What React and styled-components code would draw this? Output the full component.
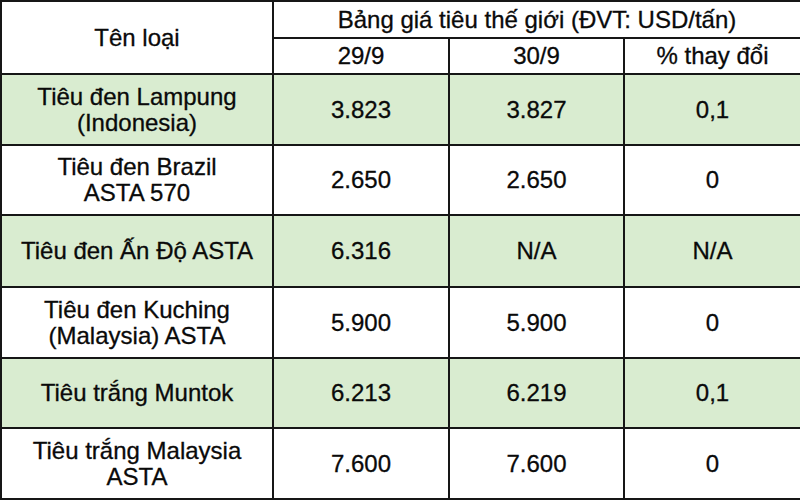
import React from "react";
import styled, { createGlobalStyle } from "styled-components";

const Global = createGlobalStyle`
  html, body { margin: 0; padding: 0; background: #ffffff; }
  body { font-family: "Liberation Sans", Arial, sans-serif; }
`;

const Table = styled.table`
  width: 800px;
  height: 500px;
  table-layout: fixed;
  border-collapse: collapse;
  border: 2px solid #161616;
  color: #0a0a0a;
  font-family: "Liberation Sans", Arial, sans-serif;
  font-size: 24px;
  line-height: 26px;
  -webkit-text-stroke: 0.3px #0a0a0a;
`;

const Row = styled.tr`
  height: ${(p) => p.$h}px;
  background: ${(p) => (p.$green ? "#d9ecd0" : "#ffffff")};
`;

const Cell = styled.td`
  border: 2px solid #161616;
  text-align: center;
  vertical-align: middle;
  padding: 0 2px;
`;

const HeadCell = styled.th`
  border: 2px solid #161616;
  text-align: center;
  vertical-align: middle;
  font-weight: normal;
  padding: 0 2px;
  background: #ffffff;
`;

const rows = [
  { name: ["Tiêu đen Lampung", "(Indonesia)"], a: "3.823", b: "3.827", c: "0,1", green: true, h: 71 },
  { name: ["Tiêu đen Brazil", "ASTA 570"], a: "2.650", b: "2.650", c: "0", green: false, h: 70 },
  { name: ["Tiêu đen Ấn Độ ASTA"], a: "6.316", b: "N/A", c: "N/A", green: true, h: 72 },
  { name: ["Tiêu đen Kuching", "(Malaysia) ASTA"], a: "5.900", b: "5.900", c: "0", green: false, h: 71 },
  { name: ["Tiêu trắng Muntok"], a: "6.213", b: "6.219", c: "0,1", green: true, h: 70 },
  { name: ["Tiêu trắng Malaysia", "ASTA"], a: "7.600", b: "7.600", c: "0", green: false, h: 71 },
];

export default function App() {
  return (
    <>
      <Global />
      <Table>
        <colgroup>
          <col style={{ width: 272 }} />
          <col style={{ width: 176 }} />
          <col style={{ width: 175 }} />
          <col style={{ width: 177 }} />
        </colgroup>
        <thead>
          <Row $h={37}>
            <HeadCell rowSpan={2}>Tên loại</HeadCell>
            <HeadCell colSpan={3}>Bảng giá tiêu thế giới (ĐVT: USD/tấn)</HeadCell>
          </Row>
          <Row $h={36}>
            <HeadCell>29/9</HeadCell>
            <HeadCell>30/9</HeadCell>
            <HeadCell>% thay đổi</HeadCell>
          </Row>
        </thead>
        <tbody>
          {rows.map((r, i) => (
            <Row key={i} $h={r.h} $green={r.green}>
              <Cell>
                {r.name.map((l, j) => (
                  <div key={j}>{l}</div>
                ))}
              </Cell>
              <Cell>{r.a}</Cell>
              <Cell>{r.b}</Cell>
              <Cell>{r.c}</Cell>
            </Row>
          ))}
        </tbody>
      </Table>
    </>
  );
}
